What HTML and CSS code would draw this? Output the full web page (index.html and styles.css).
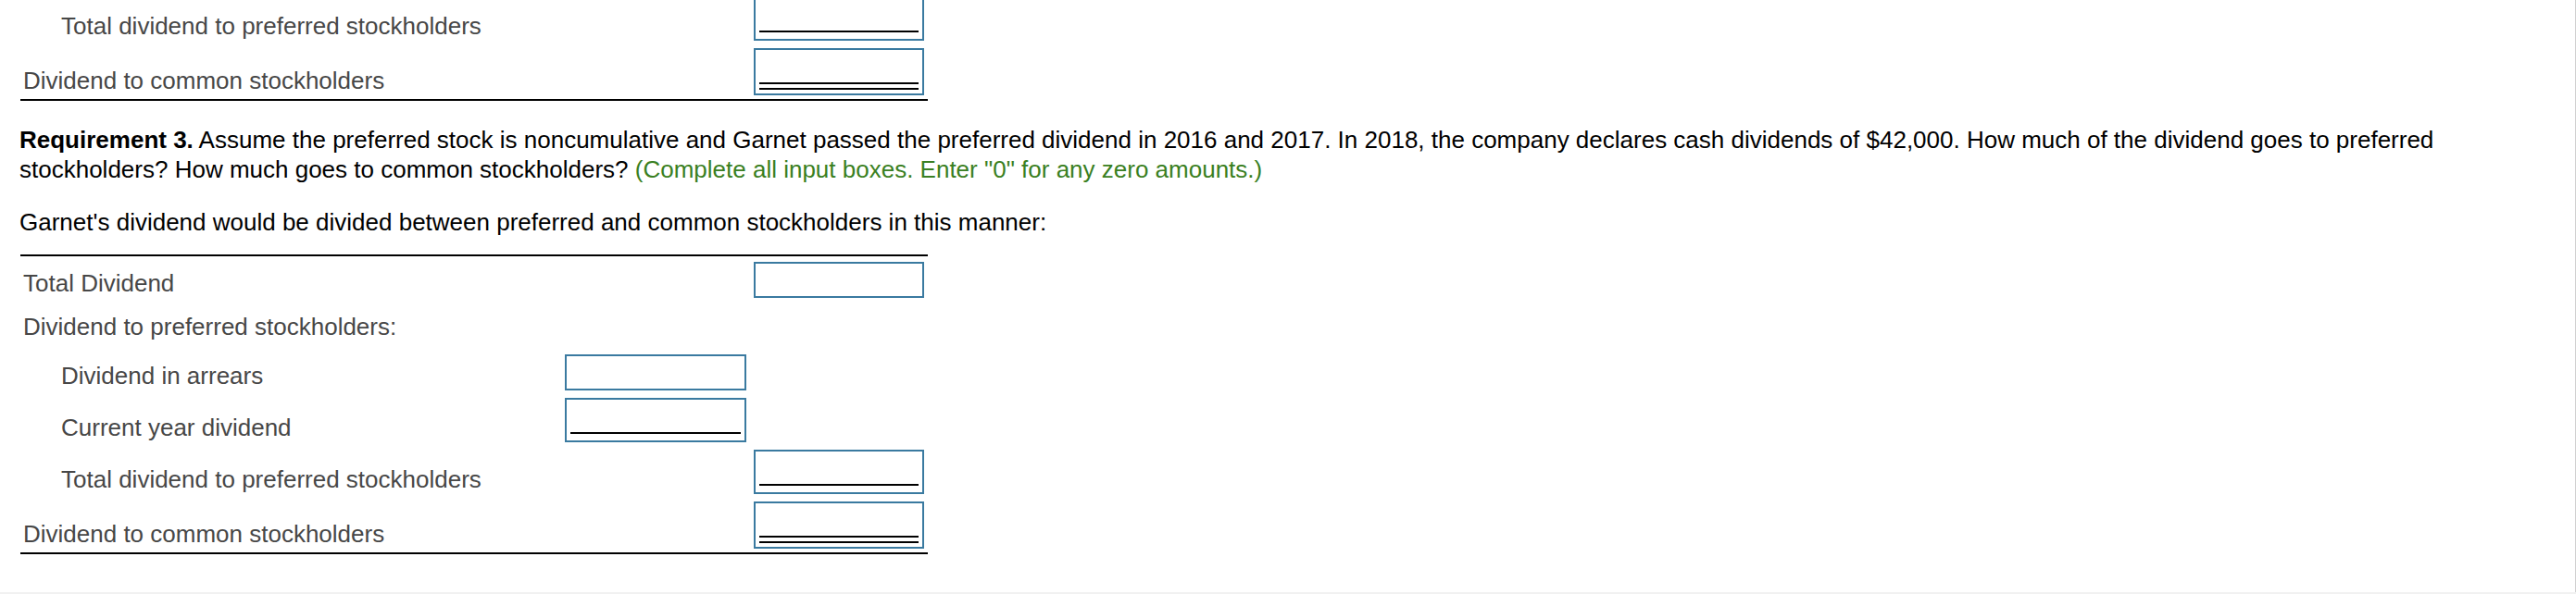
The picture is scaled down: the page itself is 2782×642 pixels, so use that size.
FILE: index.html
```html
<!DOCTYPE html>
<html lang="en">
<head>
<meta charset="utf-8">
<title>Requirement 3</title>
<link rel="stylesheet" href="styles.css">
</head>
<body>
<div class="page">
  <div class="sheet sheet-top">
    <div class="row">
      <div class="label indent">Total dividend to preferred stockholders</div>
      <div class="cell c3"><div class="box single"><div class="ul"></div></div></div>
    </div>
    <div class="row">
      <div class="label">Dividend to common stockholders</div>
      <div class="cell c3"><div class="box double"><div class="dbl"></div></div></div>
    </div>
  </div>

  <p class="req"><b>Requirement 3.</b> Assume the preferred stock is noncumulative and Garnet passed the preferred dividend in 2016 and 2017. In 2018, the company declares cash dividends of $42,000. How much of the dividend goes to preferred stockholders? How much goes to common stockholders? <span class="hint">(Complete all input boxes. Enter "0" for any zero amounts.)</span></p>

  <p class="intro">Garnet's dividend would be divided between preferred and common stockholders in this manner:</p>

  <div class="sheet sheet-bottom">
    <div class="row">
      <div class="label">Total Dividend</div>
      <div class="cell c3"><div class="box plain"></div></div>
    </div>
    <div class="row row-head">
      <div class="label">Dividend to preferred stockholders:</div>
    </div>
    <div class="row">
      <div class="label indent">Dividend in arrears</div>
      <div class="cell c2"><div class="box plain"></div></div>
    </div>
    <div class="row">
      <div class="label indent">Current year dividend</div>
      <div class="cell c2"><div class="box single"><div class="ul"></div></div></div>
    </div>
    <div class="row">
      <div class="label indent">Total dividend to preferred stockholders</div>
      <div class="cell c3"><div class="box single"><div class="ul"></div></div></div>
    </div>
    <div class="row">
      <div class="label">Dividend to common stockholders</div>
      <div class="cell c3"><div class="box double"><div class="dbl"></div></div></div>
    </div>
  </div>
</div>
</body>
</html>
```

FILE: styles.css
```css
html, body {
  margin: 0;
  padding: 0;
}
body {
  background: #f1f1f1;
  font-family: "Liberation Sans", Arial, Helvetica, sans-serif;
  font-size: 26px;
  color: #000;
}
.page {
  background: #fff;
  height: 644px;
  margin-top: -4px;
  padding-left: 21px;
  box-sizing: border-box;
  overflow: hidden;
  border-right: 1px solid #d0d0d0;
}
.sheet {
  width: 980px;
  margin-left: 1px;
  display: flex;
  flex-direction: column;
  gap: 8px;
  padding-right: 4px;
  box-sizing: border-box;
}
.sheet-top {
  padding-bottom: 4px;
  border-bottom: 2px solid #000;
}
.sheet-bottom {
  margin-top: 19px;
  padding-top: 6px;
  padding-bottom: 4px;
  border-top: 2px solid #000;
  border-bottom: 2px solid #000;
}
.row {
  display: grid;
  grid-template-columns: 1fr 196px 184px;
  column-gap: 8px;
  align-items: end;
}
.row-head {
  height: 45px;
  align-items: center;
}
.label {
  grid-column: 1;
  color: #474747;
  line-height: 32px;
  padding-left: 3px;
  white-space: nowrap;
}
.label.indent {
  padding-left: 44px;
}
.c2 { grid-column: 2; }
.c3 { grid-column: 3; }
.box {
  border: 2px solid #3a7aa0;
  box-sizing: border-box;
  padding: 0 4px;
  display: flex;
  flex-direction: column;
  justify-content: flex-end;
  background: #fff;
}
.box.plain { height: 39px; }
.box.single { height: 48px; padding-bottom: 7px; }
.box.double { height: 51px; padding-bottom: 4px; }
.ul {
  height: 2px;
  background: #000;
}
.dbl {
  height: 8px;
  box-sizing: border-box;
  border-top: 2px solid #000;
  border-bottom: 2px solid #000;
}
.req {
  margin: 26px 0 0 0;
  padding-right: 70px;
  line-height: 32px;
}
.req b {
  font-weight: bold;
}
.hint {
  color: #3a7f22;
}
.intro {
  margin: 25px 0 0 0;
  line-height: 32px;
}
```
